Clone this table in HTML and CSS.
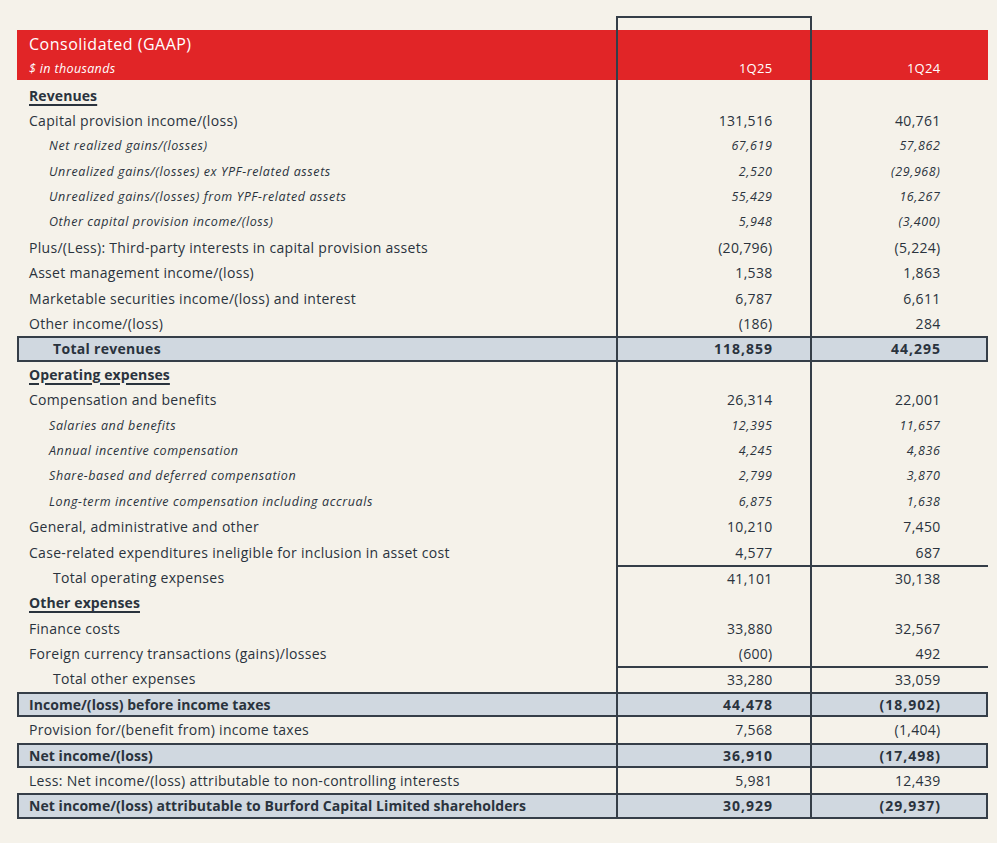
FILE: index.html
```html
<!DOCTYPE html>
<html>
<head>
<meta charset="utf-8">
<link rel="stylesheet" href="styles.css">
</head>
<body>
<div class="page">
  <div class="sheet">
    <div class="hdr">
      <div class="hdr-label">
        <div class="title">Consolidated (GAAP)</div>
        <div class="unit">$ in thousands</div>
      </div>
      <div class="num hdr-num">1Q25</div>
      <div class="num hdr-num">1Q24</div>
    </div>

    <div class="row sec"><div class="lbl"><span class="u">Revenues</span></div><div class="num"></div><div class="num"></div></div>
    <div class="row"><div class="lbl">Capital provision income/(loss)</div><div class="num">131,516</div><div class="num">40,761</div></div>
    <div class="row sub"><div class="lbl">Net realized gains/(losses)</div><div class="num">67,619</div><div class="num">57,862</div></div>
    <div class="row sub"><div class="lbl">Unrealized gains/(losses) ex YPF-related assets</div><div class="num">2,520</div><div class="num">(29,968)</div></div>
    <div class="row sub"><div class="lbl">Unrealized gains/(losses) from YPF-related assets</div><div class="num">55,429</div><div class="num">16,267</div></div>
    <div class="row sub"><div class="lbl">Other capital provision income/(loss)</div><div class="num">5,948</div><div class="num">(3,400)</div></div>
    <div class="row"><div class="lbl">Plus/(Less): Third-party interests in capital provision assets</div><div class="num">(20,796)</div><div class="num">(5,224)</div></div>
    <div class="row"><div class="lbl">Asset management income/(loss)</div><div class="num">1,538</div><div class="num">1,863</div></div>
    <div class="row"><div class="lbl">Marketable securities income/(loss) and interest</div><div class="num">6,787</div><div class="num">6,611</div></div>
    <div class="row"><div class="lbl">Other income/(loss)</div><div class="num">(186)</div><div class="num">284</div></div>
    <div class="row hl"><div class="lbl ind">Total revenues</div><div class="num">118,859</div><div class="num">44,295</div></div>

    <div class="row sec"><div class="lbl"><span class="u">Operating expenses</span></div><div class="num"></div><div class="num"></div></div>
    <div class="row"><div class="lbl">Compensation and benefits</div><div class="num">26,314</div><div class="num">22,001</div></div>
    <div class="row sub"><div class="lbl">Salaries and benefits</div><div class="num">12,395</div><div class="num">11,657</div></div>
    <div class="row sub"><div class="lbl">Annual incentive compensation</div><div class="num">4,245</div><div class="num">4,836</div></div>
    <div class="row sub"><div class="lbl">Share-based and deferred compensation</div><div class="num">2,799</div><div class="num">3,870</div></div>
    <div class="row sub"><div class="lbl">Long-term incentive compensation including accruals</div><div class="num">6,875</div><div class="num">1,638</div></div>
    <div class="row"><div class="lbl">General, administrative and other</div><div class="num">10,210</div><div class="num">7,450</div></div>
    <div class="row"><div class="lbl">Case-related expenditures ineligible for inclusion in asset cost</div><div class="num">4,577</div><div class="num">687</div></div>
    <div class="row tot"><div class="lbl ind">Total operating expenses</div><div class="num">41,101</div><div class="num">30,138</div></div>

    <div class="row sec"><div class="lbl"><span class="u">Other expenses</span></div><div class="num"></div><div class="num"></div></div>
    <div class="row"><div class="lbl">Finance costs</div><div class="num">33,880</div><div class="num">32,567</div></div>
    <div class="row"><div class="lbl">Foreign currency transactions (gains)/losses</div><div class="num">(600)</div><div class="num">492</div></div>
    <div class="row tot"><div class="lbl ind">Total other expenses</div><div class="num">33,280</div><div class="num">33,059</div></div>
    <div class="row hl"><div class="lbl">Income/(loss) before income taxes</div><div class="num">44,478</div><div class="num">(18,902)</div></div>
    <div class="row"><div class="lbl">Provision for/(benefit from) income taxes</div><div class="num">7,568</div><div class="num">(1,404)</div></div>
    <div class="row hl"><div class="lbl">Net income/(loss)</div><div class="num">36,910</div><div class="num">(17,498)</div></div>
    <div class="row"><div class="lbl">Less: Net income/(loss) attributable to non-controlling interests</div><div class="num">5,981</div><div class="num">12,439</div></div>
    <div class="row hl"><div class="lbl">Net income/(loss) attributable to Burford Capital Limited shareholders</div><div class="num">30,929</div><div class="num">(29,937)</div></div>

    <div class="frame"></div>
    <div class="tick"></div>
  </div>
</div>
</body>
</html>
```
FILE: styles.css
```css
html, body {
  margin: 0;
  padding: 0;
  background: #f5f2ea;
}
body {
  font-family: "Open Sans", "Liberation Sans", sans-serif;
  color: #2a333d;
  font-size: 14px;
  letter-spacing: 0.3px;
}
.page {
  padding: 30px 0 0 17px;
}
.sheet {
  position: relative;
  width: 971px;
}
.hdr, .row {
  display: grid;
  grid-template-columns: 600px 194px 177px;
}
.hdr {
  background: #e12527;
  color: #fff;
  height: 50px;
  margin-bottom: 2.5px;
}
.hdr-label {
  padding-left: 12px;
}
.title {
  font-size: 16px;
  line-height: 16px;
  letter-spacing: 0.5px;
  padding-top: 6px;
}
.unit {
  font-size: 12.5px;
  font-style: italic;
  letter-spacing: 0.35px;
  padding-top: 8px;
}
.hdr-num {
  align-self: end;
  padding-bottom: 3px;
  font-size: 13px;
}
.row {
  height: 25.4px;
  line-height: 26px;
  box-sizing: border-box;
}
.lbl {
  padding-left: 12px;
  white-space: nowrap;
}
.num {
  text-align: right;
}
.row .num:nth-child(2), .hdr .num:nth-child(2) {
  padding-right: 38.5px;
}
.row .num:nth-child(3), .hdr .num:nth-child(3) {
  padding-right: 47.5px;
}
.sub {
  font-style: italic;
  font-size: 12.5px;
  letter-spacing: 0.6px;
}
.sub .lbl {
  padding-left: 32px;
}
.ind {
  padding-left: 36px;
}
.sec {
  font-weight: bold;
  letter-spacing: 0.1px;
}
.u {
  text-decoration: underline;
  text-decoration-thickness: 2px;
  text-underline-offset: 3px;
}
.hl {
  background: #d0d8e0;
  border: 2px solid #353e48;
  font-weight: bold;
  letter-spacing: 0.05px;
  line-height: 22px;
}
.hl .num {
  letter-spacing: 1px;
}
.hl .lbl {
  padding-left: 10px;
}
.hl .lbl.ind {
  padding-left: 34px;
  letter-spacing: 0.3px;
}
.hl .num:nth-child(2) {
  padding-right: 40px;
}
.hl .num:nth-child(3) {
  padding-right: 49px;
}
.tot .num {
  border-top: 2px solid #353e48;
  line-height: 24px;
}
.frame {
  position: absolute;
  left: 599px;
  top: -14px;
  width: 196px;
  height: 817px;
  border: 2px solid #353e48;
  box-sizing: border-box;
  pointer-events: none;
}
.tick {
  position: absolute;
  left: 969px;
  top: 808px;
  width: 2px;
  height: 6px;
  background: #353e48;
}
```
